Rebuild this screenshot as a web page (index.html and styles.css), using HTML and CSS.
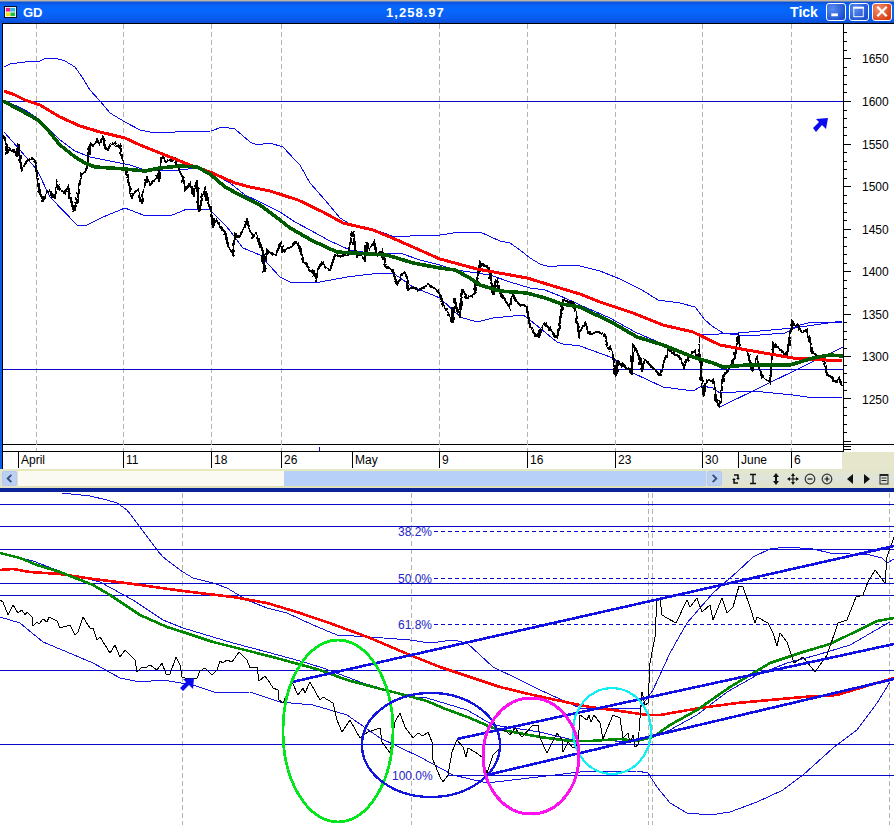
FILE: index.html
```html
<!DOCTYPE html>
<html lang="en">
<head>
<meta charset="utf-8">
<title>GD chart</title>
<link rel="stylesheet" href="styles.css">
</head>
<body>
<div class="window">
  <header class="titlebar">
    <svg class="app-icon" viewBox="0 0 14 13"><rect x="0.5" y="0.5" width="13" height="12" fill="#fff" stroke="#000"/><rect x="2" y="2" width="5" height="4" fill="#f0208a"/><rect x="7" y="2" width="5" height="4" fill="#20c0e0"/><rect x="2" y="7" width="5" height="4" fill="#f0e020"/><rect x="7" y="7" width="5" height="4" fill="#20c040"/></svg>
    <span class="symbol">GD</span>
    <span class="price">1,258.97</span>
    <span class="period">Tick</span>
    <div class="winbtns">
      <button class="winbtn"><svg viewBox="0 0 18 17"><rect x="4" y="10" width="7" height="3" fill="#fff"/></svg></button>
      <button class="winbtn"><svg viewBox="0 0 18 17"><rect x="3.5" y="3.5" width="10" height="10" fill="none" stroke="#fff"/><rect x="3" y="3" width="11" height="2" fill="#fff"/></svg></button>
      <button class="winbtn close"><svg viewBox="0 0 18 17"><path d="M4 3 L14 13 M14 3 L4 13" stroke="#fff" stroke-width="2.4"/></svg></button>
    </div>
  </header>

  <svg class="upper" viewBox="0 23 894 429">
    <defs>
      <filter id="jitter" filterUnits="userSpaceOnUse" x="0" y="23" width="894" height="429">
        <feTurbulence type="fractalNoise" baseFrequency="0.3 0.12" numOctaves="2" seed="4"/>
        <feDisplacementMap in="SourceGraphic" scale="4" xChannelSelector="R" yChannelSelector="G"/>
      </filter>
    </defs>
    <rect x="0" y="23" width="2" height="429" fill="#0a5ce8"/>
    <g class="frame">
      <line x1="2" y1="23.5" x2="894" y2="23.5"/>
      <line x1="2.5" y1="23" x2="2.5" y2="452"/>
      <line x1="2" y1="444.5" x2="894" y2="444.5"/>
      <line x1="2" y1="451.5" x2="843" y2="451.5"/>
      <line x1="843.5" y1="23" x2="843.5" y2="452"/>
    </g>
    <g class="grid">
      <line x1="36.5" y1="24" x2="36.5" y2="451"/><line x1="123.5" y1="24" x2="123.5" y2="451"/><line x1="211.5" y1="24" x2="211.5" y2="451"/><line x1="281.5" y1="24" x2="281.5" y2="451"/><line x1="439.5" y1="24" x2="439.5" y2="451"/><line x1="527.5" y1="24" x2="527.5" y2="451"/><line x1="615.5" y1="24" x2="615.5" y2="451"/><line x1="702.5" y1="24" x2="702.5" y2="451"/><line x1="791.5" y1="24" x2="791.5" y2="451"/>
    </g>
    <g class="hline">
      <line x1="3" y1="101.5" x2="843" y2="101.5"/>
      <line x1="3" y1="369.5" x2="843" y2="369.5"/>
      <line x1="319.5" y1="447" x2="319.5" y2="451"/>
    </g>
    <g class="ticks">
      <path d="M843 32.5h4M843 41.5h4M843 50h4M843 58.5h8M843 67h4M843 75.5h4M843 84h4M843 92.5h4M843 101.5h8M843 110h4M843 118.5h4M843 127h4M843 135.5h4M843 144h8M843 152.5h4M843 161h4M843 169.5h4M843 178h4M843 186.5h8M843 195h4M843 203.5h4M843 212h4M843 220.5h4M843 229h8M843 237.5h4M843 246h4M843 254.5h4M843 263h4M843 271.5h8M843 280h4M843 288.5h4M843 297h4M843 305.5h4M843 314h8M843 322.5h4M843 331h4M843 339.5h4M843 348h4M843 356.5h8M843 365h4M843 373.5h4M843 382h4M843 390.5h4M843 398.5h8M843 407h4M843 415.5h4M843 424h4M843 432.5h4M843 441.5h8M843 446.5h8M843 449h8"/>
    </g>
    <g class="ylabels">
      <text x="862" y="63">1650</text><text x="862" y="106">1600</text><text x="862" y="149">1550</text><text x="862" y="191">1500</text><text x="862" y="234">1450</text><text x="862" y="276">1400</text><text x="862" y="319">1350</text><text x="862" y="361">1300</text><text x="862" y="404">1250</text>
    </g>
    <polyline class="band" points="4,67 10,64 25,62 40,61 46,58 55,58 65,61 75,67 82,77 90,90 100,101 110,113 125,122 140,130 155,133 175,132 211,131 222,127 235,129 250,142 257,145 270,143 283,147 295,160 300,165 310,183 325,200 340,218 350,224 375,230 395,237 410,236 440,235 460,232 480,232 500,241 510,243 520,250 530,258 540,264 550,267 565,265 580,266 600,271 620,279 642,290 658,300 680,303 695,307 705,320 712,326 723,333 745,336 760,335 785,333 793,329 800,325 812,322 842,323"/>
    <polyline class="band" points="3,100 10,103 25,110 40,120 50,130 60,140 75,151 90,157 110,161 130,165 145,170 165,170 180,170 197,168 210,172 230,183 245,195 260,202 280,212 295,222 310,230 330,241 350,250 370,253 400,253 420,260 440,265 455,270 470,272 490,275 510,282 530,288 545,290 565,298 580,305 610,318 635,332 665,345 690,355 700,358 715,365 723,369"/>
    <polyline class="band" points="4,132 20,150 37,170 50,197 77,225 87,225 103,217 125,208 143,215 170,216 187,209 210,210 227,227 243,248 260,255 280,277 290,282 320,282 347,277 380,273 393,273 413,287 440,298 460,317 477,322 493,318 523,315 530,320 557,342 563,344 580,346 613,358 633,373 663,387 693,391 702,386 713,388 720,393 753,391 793,395 807,397 827,398 842,397"/>
    <polyline class="band" points="700,335 738,333 793,328 842,321"/>
    <polyline class="band" points="720,407 843,347"/>
    <polyline class="price-line" points="4,135 7,153 10,148 14,152 17,155 18,143 20,160 22,170 26,162 32,158 35,163 38,180 40,193 43,200 46,192 50,190 53,197 55,198 57,183 60,190 65,193 68,187 71,200 74,212 76,204 78,197 80,180 82,173 85,172 87,167 89,150 91,143 94,146 97,140 100,144 103,135 105,148 108,150 111,144 115,142 118,148 120,145 122,158 123,163 126,172 128,180 130,192 132,198 135,192 138,190 140,200 142,205 144,188 147,178 150,185 154,180 158,175 159,182 162,155 166,162 172,160 175,158 179,170 183,178 185,190 188,186 191,183 193,197 195,186 197,180 198,200 199,213 202,198 205,190 208,202 212,213 213,225 216,220 220,225 222,230 225,232 227,240 228,247 231,250 233,257 235,233 238,238 242,232 245,226 247,220 250,230 253,237 256,233 258,237 261,246 263,252 264,272 266,256 267,250 271,254 275,255 278,250 281,243 283,252 287,248 291,247 295,242 297,242 300,250 303,260 306,264 310,270 313,272 316,280 319,268 322,262 326,268 330,270 332,264 335,255 340,256 348,255 351,240 353,231 355,248 357,257 361,256 365,260 367,242 369,250 372,246 374,242 376,250 378,255 382,250 384,262 385,267 389,268 393,270 395,278 397,285 401,276 405,272 407,282 408,290 413,287 418,290 423,288 428,285 433,287 436,289 439,293 442,300 445,308 449,315 453,323 454,298 457,310 460,317 461,300 462,288 465,295 467,298 471,296 475,293 478,275 480,263 484,266 488,265 491,280 493,295 495,284 497,280 500,292 502,297 506,302 510,308 512,293 516,300 520,305 524,305 527,308 530,327 533,332 537,337 541,330 545,323 550,330 557,338 560,320 563,300 568,302 572,302 575,310 577,317 579,335 582,328 585,322 588,330 590,335 596,332 603,333 608,345 613,355 616,377 618,362 622,365 626,368 630,370 632,375 633,343 636,350 638,353 640,362 642,370 645,360 650,365 655,370 660,375 664,362 668,350 673,352 680,358 684,367 688,358 695,350 699,358 700,335 701,378 704,397 705,385 707,380 713,380 715,392 717,403 720,407 722,385 723,377 728,370 735,357 737,340 738,333 740,348 745,350 748,353 752,372 755,362 757,358 760,370 763,378 767,380 770,382 772,360 773,343 778,348 783,352 787,355 790,335 792,322 795,326 798,325 802,332 807,330 810,342 813,353 818,357 825,362 827,375 830,376 833,380 836,382 839,378 842,387"/>
    <polyline class="ma-red" points="4,91 15,95 25,100 40,105 60,117 80,126 100,132 125,138 140,145 160,153 190,165 210,172 235,183 250,187 270,191 298,200 323,212 343,223 373,230 397,240 440,259 477,269 527,278 563,289 580,294 600,302 633,313 663,325 693,332 720,345 747,350 793,358 842,361"/>
    <polyline class="ma-green" points="3,101 20,110 38,120 48,130 60,145 75,157 85,163 95,167 125,169 145,171 160,168 180,166 197,167 210,174 225,187 240,195 260,205 280,220 290,228 313,241 337,252 387,255 413,263 440,268 455,270 470,278 480,285 500,291 527,293 545,298 562,304 580,307 613,323 637,337 663,345 693,357 713,363 723,367 747,365 790,365 813,358 830,355 843,356"/>
    <polygon class="arrow" points="828,118 816,119 819,122 813,128 816,132 822,125 826,129"/>
  </svg>

  <div class="xaxis">
    <span class="blank"></span>
    <span class="cell">April</span><span class="cell">11</span><span class="cell">18</span><span class="cell">26</span><span class="cell">May</span><span class="cell">9</span><span class="cell">16</span><span class="cell">23</span><span class="cell">30</span><span class="cell">June</span><span class="cell">6</span>
    <span class="corner"></span>
  </div>

  <div class="scrollbar">
    <button class="sbtn"><svg viewBox="0 0 14 14"><path d="M9 3 L5 7 L9 11" fill="none" stroke="#33507a" stroke-width="2"/></svg></button>
    <div class="track"><div class="thumb"></div></div>
    <button class="sbtn"><svg viewBox="0 0 14 14"><path d="M5 3 L9 7 L5 11" fill="none" stroke="#33507a" stroke-width="2"/></svg></button>
    <div class="tools">
      <svg class="tool" viewBox="0 0 14 14"><path d="M5 3 H9 V6 M9 11 H5 V8" fill="none" stroke="#111" stroke-width="1.6"/><path d="M7 6 H11 L9 8 Z M3 8 H7 L5 6 Z" fill="#111"/></svg>
      <svg class="tool gap-s" viewBox="0 0 14 14"><path d="M4 2.5 H10 M7 2.5 V11.5 M4 11.5 H10" fill="none" stroke="#111" stroke-width="1.4"/></svg>
      <svg class="tool gap-l" viewBox="0 0 14 14"><path d="M7 1 L10 5 H8 V9 H10 L7 13 L4 9 H6 V5 H4 Z" fill="#111"/></svg>
      <svg class="tool gap-s" viewBox="0 0 14 14"><path d="M7 1 L9 4 H4.999 Z M7 13 L9 10 H5 Z M1 7 L4 5 V9 Z M13 7 L10 5 V9 Z" fill="#111"/><path d="M7 3 V11 M3 7 H11" stroke="#111" stroke-width="1.2"/></svg>
      <svg class="tool gap-s" viewBox="0 0 14 14"><circle cx="7" cy="7" r="4.8" fill="none" stroke="#333" stroke-width="1.2"/><path d="M4.5 7 H9.5" stroke="#111" stroke-width="1.2"/></svg>
      <svg class="tool gap-s" viewBox="0 0 14 14"><circle cx="7" cy="7" r="4.8" fill="none" stroke="#333" stroke-width="1.2"/><path d="M4.5 7 H9.5 M7 4.5 V9.5" stroke="#111" stroke-width="1.2"/></svg>
      <svg class="tool gap-l" viewBox="0 0 14 14"><path d="M4 7 L10 2 V12 Z" fill="#111"/></svg>
      <svg class="tool gap-s" viewBox="0 0 14 14"><path d="M10 7 L4 2 V12 Z" fill="#111"/></svg>
      <svg class="tool gap-s" viewBox="0 0 14 14"><rect x="3" y="2.5" width="8" height="9.5" fill="none" stroke="#222"/><path d="M3 3.5 H11 M4.500 6 H9.500 M4.500 8.500 H9.500" stroke="#222"/></svg>
    </div>
  </div>

  <div class="divider"></div>

  <svg class="lower" viewBox="0 492 894 333">
    <g class="grid">
      <line x1="182.500" y1="493" x2="182.500" y2="825"/><line x1="411.500" y1="493" x2="411.500" y2="825"/><line x1="648.500" y1="493" x2="648.500" y2="825"/><line x1="652.500" y1="493" x2="652.500" y2="825"/><line x1="889.500" y1="493" x2="889.500" y2="825"/>
    </g>
    <g class="hline">
      <line x1="0" y1="504.500" x2="894" y2="504.500"/>
      <line x1="0" y1="526.500" x2="894" y2="526.500"/>
      <line x1="0" y1="549.500" x2="894" y2="549.500"/>
      <line x1="0" y1="583.500" x2="894" y2="583.500"/>
      <line x1="0" y1="595.500" x2="894" y2="595.500"/>
      <line x1="0" y1="670.500" x2="894" y2="670.500"/>
      <line x1="0" y1="744.500" x2="894" y2="744.500"/>
      <line x1="448" y1="775.500" x2="894" y2="775.500"/>
    </g>
    <g class="hline dashed">
      <line x1="434" y1="531.500" x2="894" y2="531.500"/>
      <line x1="434" y1="578.500" x2="894" y2="578.500"/>
      <line x1="434" y1="624.500" x2="894" y2="624.500"/>
    </g>
    <g class="fib">
      <text x="398" y="536">38.2%</text><text x="398" y="583">50.0%</text><text x="398" y="629">61.8%</text><text x="392" y="780">100.0%</text>
    </g>
    <polyline class="thin" points="62,493 90,496 107,500 117,503 127,510 140,527 157,550 163,557 183,572 193,578 213,583 227,588 247,600 267,608 287,613 300,619 313,625 337,635 370,637 410,640 430,643 453,640 467,643 493,667 520,680 540,690 580,708 595,708 640,708 643,704 653,690 670,653 687,623 713,593 737,572 753,557 770,549 787,547 813,549 830,553 870,555 882,558 887,563 894,559"/>
    <polyline class="thin" points="0,553 33,561 67,574 100,582 133,600 163,620 183,628 233,643 267,652 300,661 323,668 363,683 410,697 427,698 467,710 493,725 540,732 573,740 600,740 630,742 653,737 670,730 697,715 727,692 757,675 787,663 817,655 850,645 890,622"/>
    <polyline class="thin" points="0,617 20,623 43,642 67,652 93,663 120,678 140,682 163,680 193,685 217,693 250,692 280,702 313,705 347,715 380,738 420,757 453,775 487,783 580,772 637,771 648,773 657,787 670,803 687,813 710,815 730,812 757,802 783,790 803,775 833,748 857,730 877,703 890,682"/>
    <polyline class="ma-red low" points="0,570 13,569 30,572 60,574 93,579 133,584 183,591 233,597 267,603 300,613 335,625 370,638 410,655 440,667 473,678 500,687 533,695 570,703 590,707 620,711 647,715 660,715 700,708 737,703 803,697 837,695 870,685 894,678"/>
    <polyline class="ma-green low" points="0,553 20,558 37,565 60,572 93,585 110,595 140,615 167,627 183,632 213,642 253,652 280,659 320,670 347,680 377,688 397,693 427,701 443,708 470,718 493,728 513,732 540,737 570,741 590,741 620,739 637,741 653,737 670,725 697,710 730,687 770,663 803,652 830,644 863,628 877,621 894,618"/>
    <polyline class="price-thin" points="0,600 3,602 8,615 13,605 18,613 22,610 25,615 27,612 32,617 33,626 37,622 39,624 43,619 47,622 49,617 57,621 60,628 70,625 75,635 78,632 83,617 88,625 90,628 93,628 97,640 100,637 110,653 115,645 120,657 125,650 135,660 137,672 142,667 145,668 150,665 157,670 162,663 166,674 170,674 176,657 180,665 182,677 185,678 197,678 200,671 205,668 212,675 217,670 220,661 223,663 227,660 232,662 239,652 247,660 250,668 257,667 259,681 265,676 270,683 273,688 278,690 279,700 283,703 292,682 298,695 303,688 305,693 310,682 320,700 323,697 333,703 337,720 342,732 350,720 360,738 368,732 380,728 382,742 390,753 395,722 400,713 405,727 413,738 418,733 423,736 428,732 432,742 433,760 440,777 443,782 448,775 452,752 457,740 463,747 466,757 468,748 475,752 482,757 487,773 493,755 500,748 498,728 507,732 510,735 515,728 522,737 533,725 538,725 540,738 547,753 557,733 562,740 563,752 568,742 573,748 578,745 580,715 587,720 589,715 591,722 594,715 600,723 603,739 613,715 620,718 623,738 628,733 630,743 633,735 635,747 638,745 642,692 645,705 648,703 650,663 653,647 655,637 657,598 660,599 662,615 667,618 676,623 687,600 690,607 697,598 702,612 710,605 713,620 722,598 727,613 733,607 739,586 743,587 750,607 755,623 757,617 768,623 773,633 777,646 780,633 787,642 794,663 803,657 815,672 827,655 838,623 847,620 856,597 863,595 868,582 875,570 885,583 887,557 894,537"/>
    <g class="trend">
      <line x1="292" y1="682" x2="894" y2="546"/>
      <line x1="457" y1="739" x2="894" y2="644"/>
      <line x1="487" y1="775" x2="894" y2="679"/>
    </g>
    <ellipse class="ring green" cx="338" cy="731" rx="55" ry="91"/>
    <ellipse class="ring blue" cx="431" cy="745" rx="69" ry="52"/>
    <ellipse class="ring cyan" cx="612" cy="731" rx="39" ry="43"/>
    <ellipse class="ring magenta" cx="531" cy="756" rx="48" ry="58"/>
    <polygon class="arrow" points="194,678 183,679 186,682 180,688 183,691 189,685 193,689"/>
  </svg>
</div>
</body>
</html>
```
FILE: styles.css
```css
* { box-sizing: border-box; }
html, body { margin: 0; padding: 0; background: #fff; }
body { font-family: "Liberation Sans", Arial, sans-serif; }
.window { width: 894px; height: 825px; display: flex; flex-direction: column; overflow: hidden; }

.titlebar {
  height: 23px; flex: none; display: flex; align-items: center; padding: 1px 2px 0 4px; color: #fff;
  font-weight: bold; font-size: 13px;
  background: linear-gradient(#b8b4a8 0, #b8b4a8 1px, #0a50d8 2px, #0a62f4 5px, #0568ff 10px, #0a5cf0 18px, #0a50dc 22px, #0a48c8 23px);
}
.app-icon { width: 13px; height: 12px; flex: none; }
.symbol { margin-left: 6px; width: 364px; }
.price { width: 56px; letter-spacing: 1px; white-space: nowrap; }
.period { margin-left: 348px; width: 36px; font-size: 14px; }
.winbtns { display: flex; gap: 3px; margin-left: auto; }
.winbtn {
  width: 20px; height: 18px; padding: 0; border: 1px solid #fff; border-radius: 3px;
  background: radial-gradient(circle at 30% 30%, #5a8cf0, #1a50d0 80%); display: block;
}
.winbtn svg { display: block; width: 18px; height: 16px; }
.winbtn.close { background: radial-gradient(circle at 30% 30%, #f09070, #d83c10 80%); }

svg.upper, svg.lower { display: block; flex: none; width: 894px; }
svg.upper { height: 429px; }
svg.lower { height: 333px; }

.frame line { stroke: #000; stroke-width: 1; shape-rendering: crispEdges; }
.grid line { stroke: #b4b4ae; stroke-width: 1; stroke-dasharray: 5 3; shape-rendering: crispEdges; }
.hline line { stroke: #0808c8; stroke-width: 1; shape-rendering: crispEdges; }
.hline.dashed line { stroke-dasharray: 4 3; }
.ticks path { stroke: #000; stroke-width: 1; fill: none; shape-rendering: crispEdges; }
.ylabels text { font: 12px "Liberation Sans", Arial, sans-serif; fill: #000; }
.fib text { font: 12px "Liberation Sans", Arial, sans-serif; fill: #2424c8; }

polyline { fill: none; stroke-linejoin: round; shape-rendering: crispEdges; }
.band { stroke: #0a0aee; stroke-width: 1; }
.thin { stroke: #1414e0; stroke-width: 1; }
.price-line { stroke: #000; stroke-width: 2.2; stroke-linejoin: miter; filter: url(#jitter); }
.price-thin { stroke: #000; stroke-width: 1; }
.ma-red { stroke: #ff0000; stroke-width: 3; }
.ma-green { stroke: #005a00; stroke-width: 3.6; }
.ma-red.low { stroke-width: 2.6; }
.ma-green.low { stroke: #008800; stroke-width: 2.6; }
.arrow { fill: #0a0aee; }
.trend line { stroke: #1010e4; stroke-width: 2.6; shape-rendering: crispEdges; }
.ring { fill: none; shape-rendering: crispEdges; }
.ring.green { stroke: #00e81c; stroke-width: 2.8; }
.ring.blue { stroke: #1414e0; stroke-width: 2.4; }
.ring.cyan { stroke: #0cf0f4; stroke-width: 2.2; }
.ring.magenta { stroke: #ff10f0; stroke-width: 3; }

.xaxis {
  height: 17px; flex: none; display: grid; background: #fff; font-size: 12px; color: #000;
  grid-template-columns: 16px 105px 88px 70px 71px 87px 88px 88px 87px 36px 53px 51px 52px;
  border-left: 2px solid #0a5ce8;
}
.xaxis .blank { border-left: 1px solid #000; }
.cell { border-left: 1px solid #000; padding-left: 2px; line-height: 16px; height: 16px; }
.corner { background: #e6e6cc; }

.scrollbar {
  height: 19px; flex: none; display: flex; align-items: center; padding: 0 0 0 2px;
  background: linear-gradient(#e4e6c8, #dfe4dc 50%, #e2e2c4);
}
.sbtn {
  width: 15px; height: 15px; padding: 0; flex: none; border: 1px solid #b4c8f0; border-radius: 2px;
  background: #bcd0f4; display: block;
}
.sbtn svg { display: block; width: 13px; height: 13px; }
.track { width: 688px; height: 17px; flex: none; margin: 0 1px; padding-left: 266px; background: #fbfaf2; border-top: 1px solid #e8ecb0; border-bottom: 1px solid #e0e0b0; }
.thumb { width: 422px; height: 100%; background: #b6d0f8; }
.tools { display: flex; align-items: center; padding-left: 7px; }
.tool { width: 14px; height: 14px; flex: none; display: block; }
.gap-s { margin-left: 3px; }
.gap-l { margin-left: 9px; }

.divider { height: 4px; flex: none; background: #0a2498; }
```
